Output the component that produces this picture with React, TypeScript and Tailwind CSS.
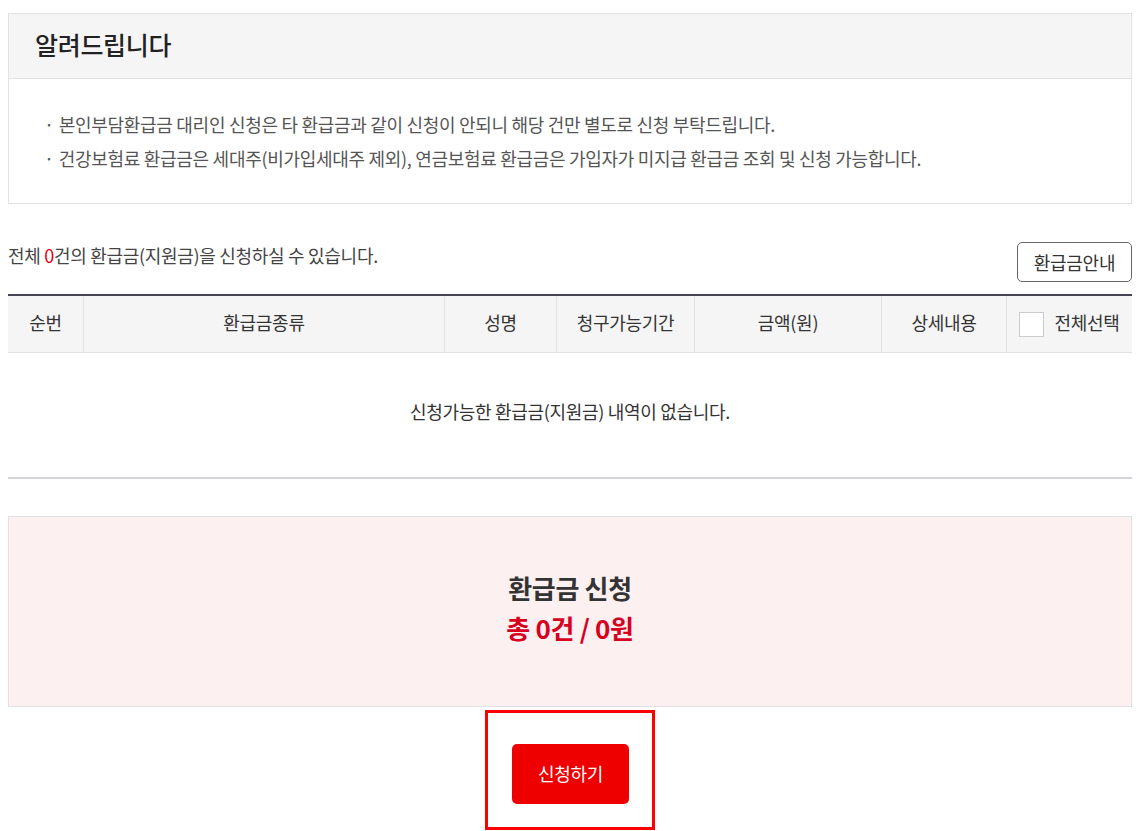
const font = { fontFamily: '"Noto Sans CJK KR", "Noto Sans", sans-serif' };

const cols = [
  { label: '순번', w: 'w-[75px]' },
  { label: '환급금종류', w: 'w-[361px]' },
  { label: '성명', w: 'w-[112px]' },
  { label: '청구가능기간', w: 'w-[138px]' },
  { label: '금액(원)', w: 'w-[187px]' },
  { label: '상세내용', w: 'w-[125px]' },
];

export default function App() {
  return (
    <div className="bg-white pl-2 pr-[11px] pt-[13px] text-[#333] tracking-[-0.3px]" style={font}>
      {/* notice box */}
      <div className="border border-[#e2e2e2]">
        <div className="h-[65px] bg-[#f5f5f5] border-b border-[#e2e2e2] pl-[26px] flex items-center pb-[3px]">
          <h2 className="text-[25px] font-medium text-[#222]">알려드립니다</h2>
        </div>
        <ul className="px-[35px] pt-[32px] pb-[31px] text-[18px] text-[#555] flex flex-col gap-[7px]">
          <li className="flex gap-[5px] leading-[27px]">
            <span>·</span>
            <span>본인부담환급금 대리인 신청은 타 환급금과 같이 신청이 안되니 해당 건만 별도로 신청 부탁드립니다.</span>
          </li>
          <li className="flex gap-[5px] leading-[27px]">
            <span>·</span>
            <span>건강보험료 환급금은 세대주(비가입세대주 제외), 연금보험료 환급금은 가입자가 미지급 환급금 조회 및 신청 가능합니다.</span>
          </li>
        </ul>
      </div>

      {/* count line */}
      <div className="mt-[38px] flex justify-between items-start">
        <p className="text-[18px] text-[#444] leading-[27px]">
          전체 <span className="text-[#e60012]">0</span>건의 환급금(지원금)을 신청하실 수 있습니다.
        </p>
        <button className="h-[40px] w-[115px] rounded-[5px] border border-[#666] text-[18px] text-[#333] bg-white">
          환급금안내
        </button>
      </div>

      {/* table */}
      <div className="mt-[12px] border-t-2 border-[#444455]">
        <div className="flex h-[57px] bg-[#f5f5f5] border-b border-[#e2e2e2] text-[18px] text-[#333]">
          {cols.map((c, i) => (
            <div
              key={c.label}
              className={`${c.w} flex items-center justify-center pb-[3px] ${i > 0 ? 'border-l border-[#e2e2e2]' : ''}`}
            >
              {c.label}
            </div>
          ))}
          <div className="flex-1 flex items-center justify-center gap-[10px] border-l border-[#e2e2e2]">
            <span className="w-[25px] h-[25px] bg-white border border-[#ccc] inline-block" />
            <span className="pb-[3px]">전체선택</span>
          </div>
        </div>
        <div className="h-[126px] flex items-center justify-center border-b-2 border-[#d5d5d9] text-[18px] text-[#333] pb-[8px]">
          신청가능한 환급금(지원금) 내역이 없습니다.
        </div>
      </div>

      {/* summary */}
      <div className="mt-[37px] h-[191px] bg-[#fdf0f1] border border-[#e0e0e5] flex flex-col items-center pt-[52px]">
        <p className="text-[26px] font-bold text-[#333] leading-[38px]">환급금 신청</p>
        <p className="text-[26px] font-bold text-[#d7001e] leading-[38px] mt-[2px]">총 0건 / 0원</p>
      </div>

      <div className="flex justify-center mt-[3px]">
        <div className="w-[170px] h-[120px] border-[3px] border-[#ff0000] flex items-start justify-center pt-[31px] pl-[1px]">
          <button className="w-[117px] h-[60px] rounded-[5px] bg-[#ee0000] text-white text-[18px] pb-[2px]">
            신청하기
          </button>
        </div>
      </div>
    </div>
  );
}
